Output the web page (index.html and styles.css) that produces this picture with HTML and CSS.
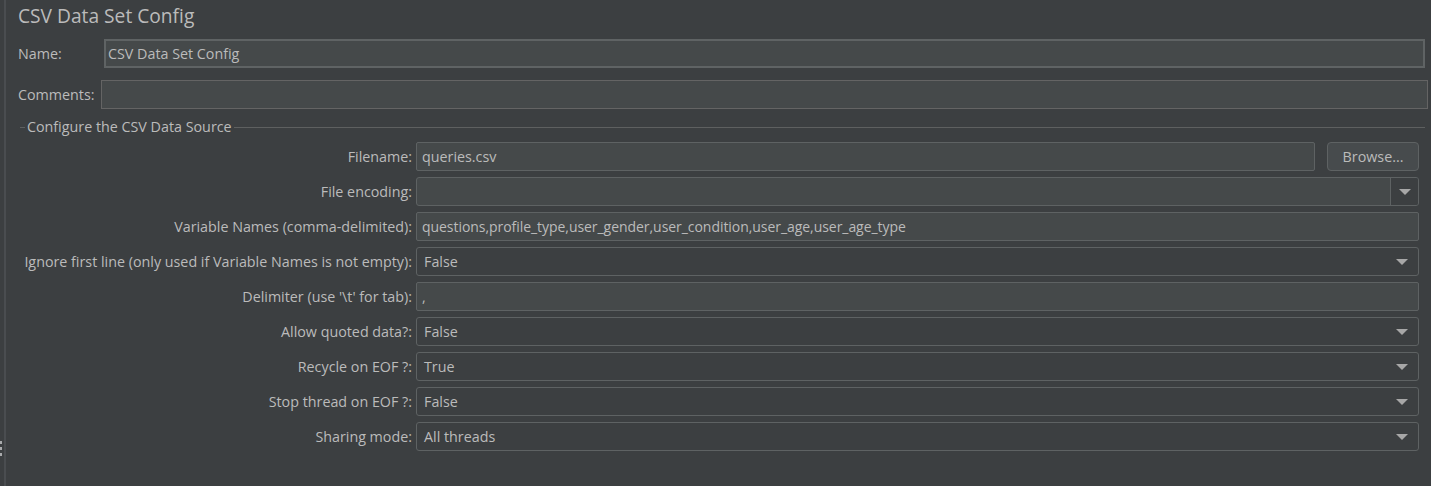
FILE: index.html
```html
<!DOCTYPE html>
<html>
<head>
<meta charset="utf-8">
<link rel="stylesheet" href="styles.css">
</head>
<body>
<div class="page">
  <div class="gutter">
    <div class="dots"><span></span><span></span><span></span></div>
  </div>
  <div class="divider"></div>
  <div class="content">
    <h1 class="title">CSV Data Set Config</h1>
    <div class="row name-row">
      <span class="lbl name-lbl">Name:</span>
      <div class="field thick">CSV Data Set Config</div>
    </div>
    <div class="row comments-row">
      <span class="lbl comments-lbl">Comments:</span>
      <div class="field"></div>
    </div>
    <div class="group-title">
      <span class="gline short"></span>
      <span class="gtext">Configure the CSV Data Source</span>
      <span class="gline long"></span>
    </div>
    <div class="form">
      <span class="flbl">Filename:</span>
      <div class="pair">
        <div class="field grow">queries.csv</div>
        <div class="button">Browse...</div>
      </div>

      <span class="flbl">File encoding:</span>
      <div class="combo editable">
        <div class="combo-text"></div>
        <div class="arrow-box"><span class="arrow"></span></div>
      </div>

      <span class="flbl">Variable Names (comma-delimited):</span>
      <div class="field small">questions,profile_type,user_gender,user_condition,user_age,user_age_type</div>

      <span class="flbl">Ignore first line (only used if Variable Names is not empty):</span>
      <div class="combo">
        <div class="combo-text">False</div>
        <span class="arrow"></span>
      </div>

      <span class="flbl">Delimiter (use '\t' for tab):</span>
      <div class="field">,</div>

      <span class="flbl">Allow quoted data?:</span>
      <div class="combo">
        <div class="combo-text">False</div>
        <span class="arrow"></span>
      </div>

      <span class="flbl">Recycle on EOF ?:</span>
      <div class="combo">
        <div class="combo-text">True</div>
        <span class="arrow"></span>
      </div>

      <span class="flbl">Stop thread on EOF ?:</span>
      <div class="combo">
        <div class="combo-text">False</div>
        <span class="arrow"></span>
      </div>

      <span class="flbl">Sharing mode:</span>
      <div class="combo">
        <div class="combo-text">All threads</div>
        <span class="arrow"></span>
      </div>
    </div>
  </div>
</div>
</body>
</html>
```

FILE: styles.css
```css
* { box-sizing: border-box; }
html, body {
  margin: 0;
  padding: 0;
  background: #3c3f41;
}
body {
  font-family: "Open Sans", "Noto Sans", sans-serif;
  font-size: 14.3px;
  color: #bbbbbb;
  width: 1431px;
  height: 486px;
  overflow: hidden;
}
.page {
  display: flex;
  height: 486px;
}
.gutter {
  width: 4px;
  display: flex;
  flex-direction: column;
}
.dots {
  margin-top: 441px;
  display: flex;
  flex-direction: column;
  gap: 3px;
}
.dots span {
  display: block;
  width: 2px;
  height: 3px;
  background: #a9abad;
}
.divider {
  width: 2px;
  background: #4a4d50;
}
.content {
  flex: 1;
  display: flex;
  flex-direction: column;
  padding: 0 0 0 12px;
}
.title {
  margin: 0;
  font-weight: 400;
  font-size: 19.2px;
  line-height: 28px;
  padding-top: 2px;
  height: 39px;
  color: #bbbbbb;
}
.row {
  display: flex;
  align-items: center;
  height: 29px;
}
.name-row { margin-right: 6px; }
.comments-row { margin-top: 12px; margin-right: 3px; }
.name-lbl { width: 86px; }
.comments-lbl { width: 83px; }
.lbl { flex: none; }
.field {
  flex: 1;
  height: 29px;
  background: #45494a;
  border: 1px solid #646464;
  padding: 0 5px;
  line-height: 27px;
  white-space: nowrap;
  overflow: hidden;
}
.field.small { font-size: 14px; letter-spacing: -0.05px; }
.field.thick {
  border: 2px solid #5f6364;
  line-height: 25px;
  padding: 0 2px;
}
.group-title {
  display: flex;
  align-items: center;
  height: 20px;
  margin-top: 8px;
  margin-left: 2px;
  margin-right: 6px;
}
.gline {
  height: 1px;
  background: #5e6060;
}
.gline.short { width: 5px; }
.gline.long { flex: 1; }
.gtext {
  padding: 0 2px;
  line-height: 20px;
}
.form {
  display: grid;
  grid-template-columns: 392px 1fr;
  column-gap: 4px;
  row-gap: 6px;
  margin-top: 5px;
  margin-left: 2px;
  margin-right: 12px;
}
.flbl {
  text-align: right;
  line-height: 29px;
  white-space: nowrap;
  justify-self: end;
}
.form .field {
  border-radius: 2px;
  border-color: #5e6263;
}
.pair {
  display: flex;
  gap: 12px;
}
.pair .field.grow { flex: 1; }
.button {
  width: 92px;
  height: 29px;
  border: 1px solid #5e6263;
  border-radius: 4px;
  background: #474b4d;
  text-align: center;
  line-height: 27px;
}
.combo {
  display: flex;
  align-items: center;
  height: 29px;
  border: 1px solid #5e6263;
  border-radius: 3px;
  background: #3c3f41;
  padding-right: 10px;
}
.combo .combo-text {
  flex: 1;
  padding: 0 7px;
  line-height: 27px;
}
.combo.editable {
  padding-right: 0;
  background: #45494a;
  overflow: hidden;
}
.arrow-box {
  width: 28px;
  height: 27px;
  border-left: 1px solid #5e6263;
  background: #3c3f41;
  display: flex;
  align-items: center;
  justify-content: center;
}
.arrow {
  width: 0;
  height: 0;
  border-left: 6px solid transparent;
  border-right: 6px solid transparent;
  border-top: 6px solid #a7a7a7;
}
```
